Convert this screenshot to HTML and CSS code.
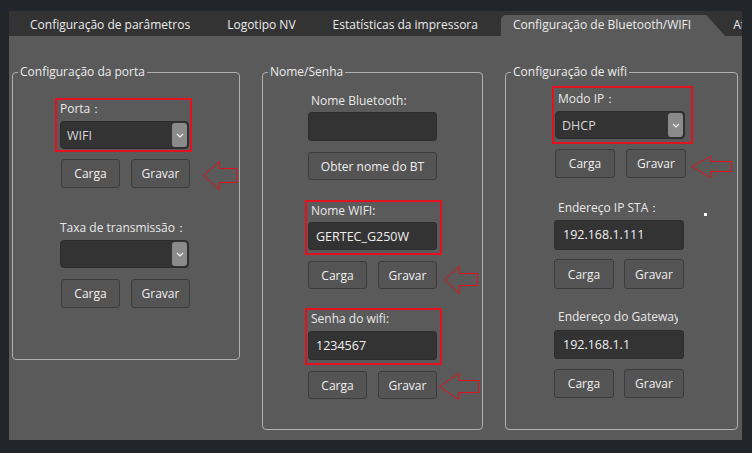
FILE: index.html
```html
<!DOCTYPE html>
<html lang="pt">
<head>
<meta charset="utf-8">
<title>Configuração de Bluetooth/WIFI</title>
<link rel="stylesheet" href="styles.css">
</head>
<body>
<div class="window">
  <div class="tabbar">
    <span class="tab first">Configuração de parâmetros</span>
    <span class="tab">Logotipo NV</span>
    <span class="tab">Estatísticas da impressora</span>
    <span class="tab active">Configuração de Bluetooth/WIFI</span>
    <span class="tab after">Atualização</span>
  </div>
  <div class="panel">
    <fieldset class="box box-porta">
      <legend>Configuração da porta</legend>
      <div class="col col-porta">
        <div class="group red g-porta">
          <div class="lbl flat">Porta：</div>
          <div class="select"><span class="val">WIFI</span><span class="drop"><svg viewBox="0 0 8 5" width="8" height="5"><path d="M1 1 L4 4 L7 1" fill="none" stroke="#f2f2f2" stroke-width="1.2"/></svg></span></div>
        </div>
        <div class="btns b-porta1"><button class="btn">Carga</button><button class="btn">Gravar</button></div>
        <div class="group g-taxa">
          <div class="lbl flat">Taxa de transmissão：</div>
          <div class="select"><span class="val"></span><span class="drop"><svg viewBox="0 0 8 5" width="8" height="5"><path d="M1 1 L4 4 L7 1" fill="none" stroke="#f2f2f2" stroke-width="1.2"/></svg></span></div>
        </div>
        <div class="btns b-porta2"><button class="btn">Carga</button><button class="btn">Gravar</button></div>
      </div>
    </fieldset>

    <fieldset class="box box-nome">
      <legend>Nome/Senha</legend>
      <div class="col col-nome">
        <div class="group g-bt">
          <div class="lbl">Nome Bluetooth:</div>
          <div class="input"></div>
        </div>
        <button class="btn wide">Obter nome do BT</button>
        <div class="group red g-wifi">
          <div class="lbl">Nome WIFI:</div>
          <div class="input">GERTEC_G250W</div>
        </div>
        <div class="btns b-nome"><button class="btn">Carga</button><button class="btn">Gravar</button></div>
        <div class="group red g-senha">
          <div class="lbl">Senha do wifi:</div>
          <div class="input tall">1234567</div>
        </div>
        <div class="btns b-nome"><button class="btn">Carga</button><button class="btn">Gravar</button></div>
      </div>
    </fieldset>

    <fieldset class="box box-wifi">
      <legend>Configuração de wifi</legend>
      <div class="col col-wifi">
        <div class="group red g-modo">
          <div class="lbl">Modo IP：</div>
          <div class="select wide-sel"><span class="val">DHCP</span><span class="drop"><svg viewBox="0 0 8 5" width="8" height="5"><path d="M1 1 L4 4 L7 1" fill="none" stroke="#f2f2f2" stroke-width="1.2"/></svg></span></div>
        </div>
        <div class="btns b-modo"><button class="btn w60">Carga</button><button class="btn w60">Gravar</button></div>
        <div class="group g-sta">
          <div class="lbl l4">Endereço IP STA：</div>
          <div class="input ip">192.168.1.111</div>
        </div>
        <div class="btns b-ip"><button class="btn w60">Carga</button><button class="btn w60">Gravar</button></div>
        <div class="group g-gw">
          <div class="lbl l4 clip">Endereço do Gateway</div>
          <div class="input ip">192.168.1.1</div>
        </div>
        <div class="btns b-ip b-gw"><button class="btn w60">Carga</button><button class="btn w60">Gravar</button></div>
      </div>
    </fieldset>
  </div>
</div>

<svg class="marks" width="752" height="453" viewBox="0 0 752 453">
  <g fill="none" stroke="#e3121e" stroke-width="1">
    <polygon points="203.5,175.5 219.5,161.5 219.5,168.5 236.5,168.5 236.5,182.5 219.5,182.5 219.5,189.5"/>
    <polygon points="444.5,279.5 459.5,266.5 459.5,273.5 477.5,273.5 477.5,285.5 459.5,285.5 459.5,293.5"/>
    <polygon points="439.5,386.5 458.5,373.5 458.5,380.5 478.5,380.5 478.5,392.5 458.5,392.5 458.5,399.5"/>
    <polygon points="691.5,166.5 710.5,156.5 710.5,161.5 731.5,161.5 731.5,171.5 710.5,171.5 710.5,177.5"/>
  </g>
  <rect x="704" y="213" width="3" height="3" fill="#ffffff"/>
</svg>
</body>
</html>
```

FILE: styles.css
```css
* { box-sizing: border-box; }

body {
  margin: 0;
  width: 752px;
  height: 453px;
  background: #22262a;
  font-family: "Open Sans", "Noto Sans", sans-serif;
  font-size: 12px;
  color: #e6e6e6;
  overflow: hidden;
  position: relative;
}

.window {
  margin: 11px 0 0 9px;
  width: 733px;
  height: 429px;
  display: flex;
  flex-direction: column;
}

.tabbar {
  height: 25px;
  background: #333333;
  display: flex;
  align-items: flex-end;
  overflow: hidden;
  white-space: nowrap;
}

.tab {
  height: 21px;
  line-height: 20px;
  padding: 0 18px;
  margin-right: 1px;
  color: #ececec;
  flex: none;
}

.tab.first { margin-left: 3px; }

.tab.active {
  background: #5a5a5a;
  border-top-left-radius: 5px;
  padding: 0 34px 0 12px;
  margin-left: 4px;
  margin-right: 0;
  clip-path: polygon(0 0, calc(100% - 19px) 0, 100% 100%, 0 100%);
}

.tab.after { padding-left: 8px; }

.panel {
  flex: 1;
  background: #5a5a5a;
  display: flex;
  align-items: flex-start;
  padding: 27px 0 0 3px;
}

.box {
  margin: 0;
  padding: 0;
  min-width: 0;
  border: 1px solid #b0b0b0;
  border-radius: 4px;
}

.box legend {
  line-height: 18px;
  font-size: 12px;
  padding: 0 2px;
  margin-left: 5px;
  color: #ececec;
}

.box-porta { width: 228px; height: 297px; }
.box-nome { width: 221px; height: 367px; margin-left: 22px; }
.box-wifi { width: 233px; height: 367px; margin-left: 22px; }

.col {
  display: flex;
  flex-direction: column;
  align-items: flex-start;
}

.col-porta { padding-left: 42px; }
.col-nome { padding-left: 42px; }
.col-wifi { padding-left: 46px; }

.group {
  border: 2px solid transparent;
  padding: 0 3px 3px 1px;
}

.group.red { border-color: #e3121e; }

.lbl {
  line-height: 17px;
  height: 17px;
  padding-left: 3px;
  font-size: 12px;
  color: #e8e8e8;
  white-space: nowrap;
}

.lbl.flat { padding-left: 0; }
.lbl.l4 { padding-left: 4px; }
.lbl.clip { width: 124px; overflow: hidden; }

.select {
  width: 129px;
  height: 28px;
  margin-top: 4px;
  background: #333333;
  border: 1px solid #2c2c2c;
  border-radius: 4px;
  display: flex;
  align-items: center;
  padding: 1px;
}

.select .val {
  flex: 1;
  padding-left: 5px;
  color: #d8d8d8;
  font-size: 12.5px;
}

.select .drop {
  width: 15px;
  height: 100%;
  background: #8a8a8a;
  border-radius: 3px;
  display: flex;
  align-items: center;
  justify-content: center;
}

.select.wide-sel { width: 130px; }

.input {
  width: 129px;
  height: 29px;
  margin-top: 3px;
  background: #333333;
  border: 1px solid #2e2e2e;
  border-radius: 3px;
  padding-left: 7px;
  line-height: 27px;
  font-size: 12.5px;
  color: #f0f0f0;
}

.input.tall { margin-top: 4px; }
.input.ip { width: 130px; height: 30px; margin-top: 4px; line-height: 28px; padding-left: 8px; }

.btns {
  display: flex;
  gap: 11px;
}

.btn {
  width: 59px;
  height: 29px;
  background: #545454;
  border: 1px solid #3c3c3c;
  border-radius: 3px;
  color: #f0f0f0;
  font-family: inherit;
  font-size: 12px;
  padding: 0;
}

.btn.w60 { width: 60px; }
.btn.wide { width: 129px; height: 28px; margin: 6px 0 0 3px; }

/* fieldset 1 */
.g-porta { margin: 17px 0 0 0; padding: 0 1px 1px 3px; }
.b-porta1 { margin: 7px 0 0 6px; }
.g-taxa { margin-top: 29px; padding: 0 1px 1px 3px; }
.b-porta2 { margin: 8px 0 0 6px; }

/* fieldset 2 */
.g-bt { margin-top: 9px; }
.g-wifi { margin-top: 20px; }
.g-wifi .input { height: 28px; }
.b-nome { margin: 6px 0 0 3px; }
.b-nome .btn { height: 28px; }
.g-senha { margin-top: 19px; }

/* fieldset 3 */
.g-modo { margin-top: 5px; padding: 2px 6px 3px 1px; }
.b-modo { margin: 5px 0 0 3px; }
.g-sta { margin-top: 19px; padding: 0; }
.b-ip { margin: 7px 0 0 2px; gap: 10px; }
.b-ip .btn { height: 30px; }
.g-gw { margin-top: 17px; padding: 0; }
.g-gw .input { height: 29px; margin-top: 5px; }
.b-gw { margin-top: 8px; }
.b-gw .btn { height: 29px; }

.marks {
  position: absolute;
  left: 0;
  top: 0;
  pointer-events: none;
}
```
